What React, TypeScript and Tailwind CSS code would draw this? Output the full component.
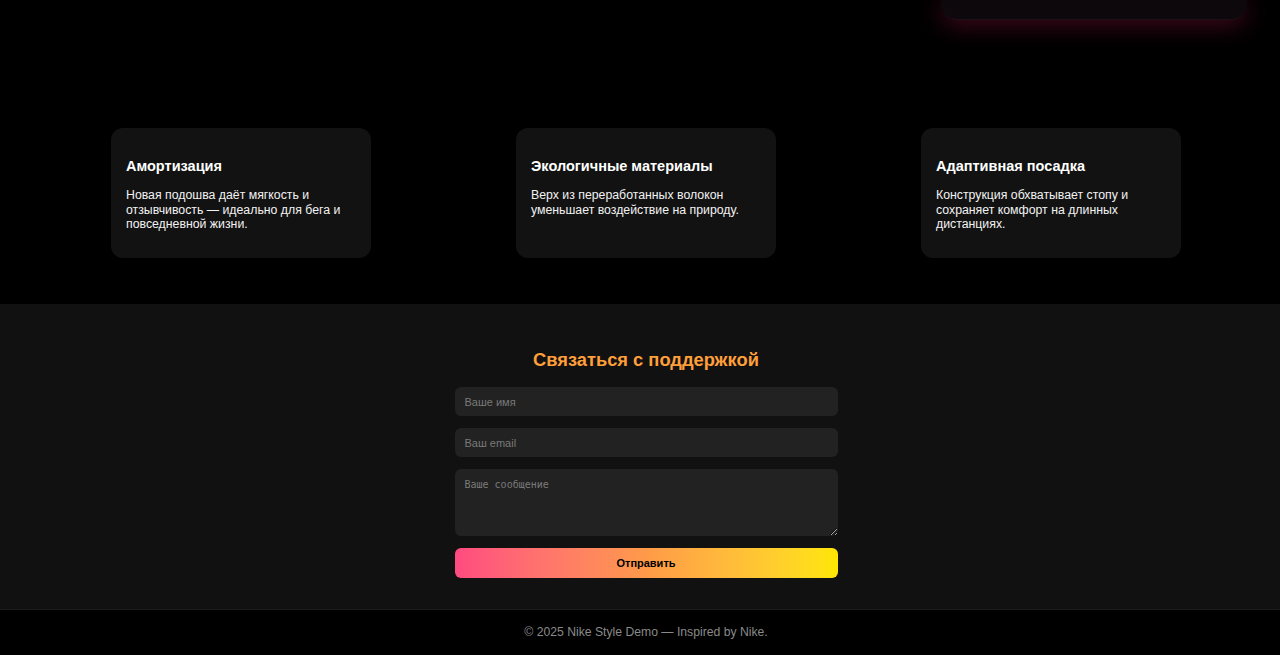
const features = [
  {
    title: "Амортизация",
    text: "Новая подошва даёт мягкость и отзывчивость — идеально для бега и повседневной жизни.",
  },
  {
    title: "Экологичные материалы",
    text: "Верх из переработанных волокон уменьшает воздействие на природу.",
  },
  {
    title: "Адаптивная посадка",
    text: "Конструкция обхватывает стопу и сохраняет комфорт на длинных дистанциях.",
  },
];

export default function App() {
  return (
    <div
      className="min-h-[655px] bg-black text-white"
      style={{ fontFamily: '"Liberation Sans", Arial, sans-serif' }}
    >
      {/* низ карточки героя */}
      <div className="flex justify-end pr-[33px]">
        <div className="h-[20px] w-[306px] rounded-b-[16px] border-b border-[#1c0f16] bg-[#0d080c] shadow-[0_4px_24px_rgba(150,20,65,0.5)]" />
      </div>

      {/* Преимущества */}
      <section className="flex gap-[145px] pl-[111px] pt-[108px] pb-[46px]">
        {features.map((f) => (
          <div
            key={f.title}
            className="h-[130px] w-[260px] rounded-[12px] bg-[#121212] px-[15px] pt-[29px]"
          >
            <h3 className="mb-[13px] text-[14.5px] font-bold leading-[18px] text-white">
              {f.title}
            </h3>
            <p className="text-[12.3px] leading-[14.5px] text-[#f2f2f2]">{f.text}</p>
          </div>
        ))}
      </section>

      {/* Контакты */}
      <section className="bg-[#111111] pl-[12px] pt-[45px] pb-[31px]">
        <h2 className="text-center text-[18.3px] font-bold leading-[22px] text-[#ff9f3a]">
          Связаться с поддержкой
        </h2>
        <form className="mx-auto mt-[16px] flex w-[383px] flex-col gap-[12px]">
          <input
            placeholder="Ваше имя"
            className="h-[29px] rounded-[6px] bg-[#222222] px-[10px] text-[11px] text-white outline-none placeholder:text-[#7a7a7a]"
          />
          <input
            placeholder="Ваш email"
            className="h-[29px] rounded-[6px] bg-[#222222] px-[10px] text-[11px] text-white outline-none placeholder:text-[#7a7a7a]"
          />
          <textarea
            placeholder="Ваше сообщение"
            className="h-[67px] rounded-[6px] bg-[#222222] px-[10px] py-[8px] text-[10px] text-white outline-none placeholder:text-[#7a7a7a]"
            style={{ fontFamily: '"DejaVu Sans Mono", monospace' }}
          />
          <button
            type="button"
            className="h-[30px] rounded-[6px] bg-gradient-to-r from-[#ff4a80] via-[#ff9a48] to-[#ffe600] text-[11px] font-bold text-black"
          >
            Отправить
          </button>
        </form>
      </section>

      <footer className="flex h-[46px] items-center justify-center border-t border-[#1a1a1a] bg-black pl-[12px] text-[12.2px] text-[#8a8a8a]">
        © 2025 Nike Style Demo — Inspired by Nike.
      </footer>
    </div>
  );
}
